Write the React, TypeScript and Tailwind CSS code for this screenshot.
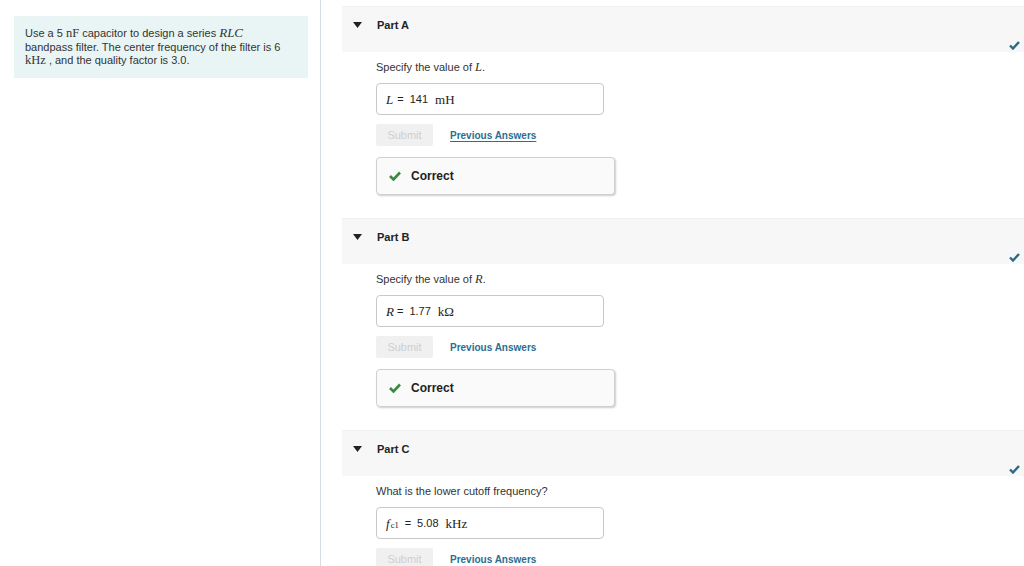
import { ReactNode } from "react";

const serif = "font-['Liberation_Serif','DejaVu_Serif',serif] leading-none";

const Caret = () => (
  <svg width="9" height="6" viewBox="0 0 9 6" className="shrink-0">
    <path d="M0 0 L9 0 L4.5 6 Z" fill="#222" />
  </svg>
);

const HeaderCheck = () => (
  <svg width="11" height="9" viewBox="0 0 11 9" className="absolute right-[4px] bottom-[2px]">
    <path d="M1 4.5 L4 7.5 L10 1" stroke="#2c6a85" strokeWidth="2.4" fill="none" />
  </svg>
);

const GreenCheck = () => (
  <svg width="12" height="10" viewBox="0 0 12 10" className="shrink-0">
    <path d="M1 5 L4.5 8.5 L11 1.5" stroke="#3a8a3f" strokeWidth="2.6" fill="none" />
  </svg>
);

type PartProps = {
  title: string;
  prompt: ReactNode;
  answer: ReactNode;
  underline?: boolean;
  showResult?: boolean;
};

const Part = ({ title, prompt, answer, underline, showResult = true }: PartProps) => (
  <section className="ml-[21px] mb-[23px]">
    <div className="relative h-[46px] bg-[#f7f7f7] border-t border-[#f0f0f0] pl-[11px] pt-[11px]">
      <div className="flex items-center gap-[15px] h-[14px]">
        <Caret />
        <span className="font-bold text-[11px] text-[#222]">{title}</span>
      </div>
      <HeaderCheck />
    </div>
    <div className="pl-[34px] pt-[8px]">
      <p className="text-[11px] leading-[14px] text-[#333]">{prompt}</p>
      <div className="mt-[9px] w-[228px] h-[32px] border border-[#c8c8c8] rounded-[4px] bg-white flex items-center pl-[9px] text-[11px] text-[#222]">
        {answer}
      </div>
      <div className="mt-[9px] flex items-center gap-[17px]">
        <button className="w-[57px] h-[22px] bg-[#f0f0f0] text-[#cfcfcf] text-[11px] rounded-[2px]">
          Submit
        </button>
        <a
          className={`text-[10px] font-bold text-[#2a6f92] ${underline ? "underline underline-offset-2" : ""}`}
        >
          Previous Answers
        </a>
      </div>
      {showResult && (
        <div className="mt-[11px] w-[239px] h-[38px] border border-[#d0d0d0] rounded-[4px] bg-[#fafafa] shadow-[1px_1px_2px_rgba(0,0,0,0.2)] flex items-center pl-[12px] gap-[10px]">
          <GreenCheck />
          <span className="font-bold text-[12px] text-[#222]">Correct</span>
        </div>
      )}
    </div>
  </section>
);

export default function App() {
  return (
    <div className="w-[1024px] h-[566px] overflow-hidden bg-white flex font-['Liberation_Sans',Arial,sans-serif]">
      <aside className="w-[321px] shrink-0 border-r border-[#d5dde8] pt-[16px] pl-[14px]">
        <div className="w-[294px] h-[62px] bg-[#e9f5f5] pl-[11px] pr-[20px] pt-[10px] text-[11px] leading-[13.5px] text-[#333]">
          Use a 5 <span className={`${serif} text-[12.5px]`}>nF</span> capacitor to design a series{" "}
          <span className={`${serif} italic text-[13px]`}>RLC</span> bandpass filter. The center frequency of
          the filter is 6 <span className={`${serif} text-[12.5px]`}>kHz</span> , and the quality factor is 3.0.
        </div>
      </aside>
      <main className="flex-1 pt-[6px]">
        <Part
          title="Part A"
          underline
          prompt={
            <>
              Specify the value of <span className={`${serif} italic text-[12.5px]`}>L</span>.
            </>
          }
          answer={
            <>
              <span className={`${serif} italic text-[13px]`}>L</span>
              <span className="ml-[4px]">=</span>
              <span className="ml-[6px]">141</span>
              <span className={`${serif} text-[13px] ml-[7px]`}>mH</span>
            </>
          }
        />
        <Part
          title="Part B"
          prompt={
            <>
              Specify the value of <span className={`${serif} italic text-[12.5px]`}>R</span>.
            </>
          }
          answer={
            <>
              <span className={`${serif} italic text-[13px]`}>R</span>
              <span className="ml-[3px]">=</span>
              <span className="ml-[6px]">1.77</span>
              <span className={`${serif} text-[13px] ml-[7px]`}>kΩ</span>
            </>
          }
        />
        <Part
          title="Part C"
          showResult={false}
          prompt="What is the lower cutoff frequency?"
          answer={
            <>
              <span className={`${serif} italic text-[13px]`}>f</span>
              <span className={`${serif} text-[8.5px] mt-[5px] ml-[1px]`}>c1</span>
              <span className="ml-[6px]">=</span>
              <span className="ml-[6px]">5.08</span>
              <span className={`${serif} text-[13px] ml-[7px]`}>kHz</span>
            </>
          }
        />
      </main>
    </div>
  );
}
